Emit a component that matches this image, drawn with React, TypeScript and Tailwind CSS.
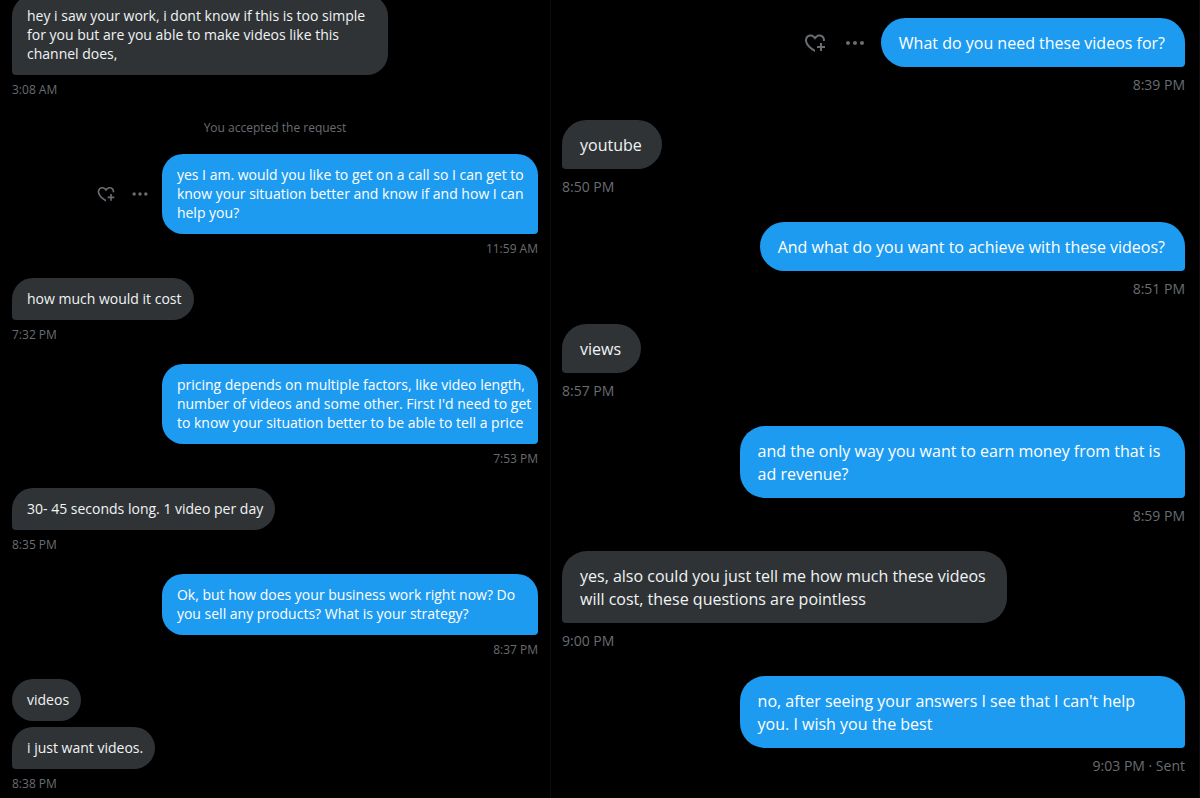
import clsx from "clsx";

type Message = {
  from: "me" | "them";
  text: string;
  time?: string;
  actions?: boolean;
};

type Size = "sm" | "lg";

const firstMessage: Message = {
  from: "them",
  text: "hey i saw your work, i dont know if this is too simple for you but are you able to make videos like this channel does,",
  time: "3:08 AM",
};

const pricingMessages: Message[] = [
  {
    from: "me",
    text: "yes I am. would you like to get on a call so I can get to know your situation better and know if and how I can help you?",
    time: "11:59 AM",
    actions: true,
  },
  { from: "them", text: "how much would it cost", time: "7:32 PM" },
  {
    from: "me",
    text: "pricing depends on multiple factors, like video length, number of videos and some other. First I'd need to get to know your situation better to be able to tell a price",
    time: "7:53 PM",
  },
  { from: "them", text: "30- 45 seconds long. 1 video per day", time: "8:35 PM" },
  {
    from: "me",
    text: "Ok, but how does your business work right now? Do you sell any products? What is your strategy?",
    time: "8:37 PM",
  },
  { from: "them", text: "videos" },
  { from: "them", text: "i just want videos.", time: "8:38 PM" },
];

const goalMessages: Message[] = [
  {
    from: "me",
    text: "What do you need these videos for?",
    time: "8:39 PM",
    actions: true,
  },
  { from: "them", text: "youtube", time: "8:50 PM" },
  {
    from: "me",
    text: "And what do you want to achieve with these videos?",
    time: "8:51 PM",
  },
  { from: "them", text: "views", time: "8:57 PM" },
  {
    from: "me",
    text: "and the only way you want to earn money from that is ad revenue?",
    time: "8:59 PM",
  },
  {
    from: "them",
    text: "yes, also could you just tell me how much these videos will cost, these questions are pointless",
    time: "9:00 PM",
  },
  {
    from: "me",
    text: "no, after seeing your answers I see that I can't help you. I wish you the best",
    time: "9:03 PM · Sent",
  },
];

const HeartPlusIcon = ({ className }: { className: string }) => (
  <svg viewBox="0 0 24 24" fill="currentColor" className={className}>
    <path d="M17 12v3h-2.998v2h3v3h2v-3h3v-2h-3.001v-3H17zm-5 6.839c-3.871-2.34-6.053-4.639-7.127-6.609-1.112-2.04-1.031-3.7-.479-4.82.561-1.13 1.667-1.84 2.91-1.91 1.222-.06 2.68.51 3.892 2.16l.806 1.09.805-1.09c1.211-1.65 2.668-2.22 3.89-2.16 1.242.07 2.347.78 2.908 1.91.334.677.49 1.554.321 2.59h2.011c.153-1.283-.039-2.469-.539-3.48-.887-1.79-2.647-2.91-4.601-3.01-1.65-.09-3.367.56-4.796 2.01-1.43-1.45-3.147-2.1-4.798-2.01-1.954.1-3.714 1.22-4.601 3.01-.896 1.81-.846 4.17.514 6.67 1.353 2.48 4.003 5.12 8.382 7.67l.502.299v-2.32z" />
  </svg>
);

const MoreIcon = ({ className }: { className: string }) => (
  <svg viewBox="0 0 24 24" fill="currentColor" className={className}>
    <path d="M3 12c0-1.1.9-2 2-2s2 .9 2 2-.9 2-2 2-2-.9-2-2zm9 2c1.1 0 2-.9 2-2s-.9-2-2-2-2 .9-2 2 .9 2 2 2zm7 0c1.1 0 2-.9 2-2s-.9-2-2-2-2 .9-2 2 .9 2 2 2z" />
  </svg>
);

const Actions = ({ size }: { size: Size }) => {
  const icon = size === "sm" ? "size-5" : "size-6";
  return (
    <div
      className={clsx(
        "flex shrink-0 text-[#686d72]",
        size === "sm" ? "mr-3 gap-3.5" : "mr-3.5 gap-4"
      )}
    >
      <button type="button" aria-label="Add reaction">
        <HeartPlusIcon className={icon} />
      </button>
      <button type="button" aria-label="More">
        <MoreIcon className={icon} />
      </button>
    </div>
  );
};

const Bubble = ({ message, size }: { message: Message; size: Size }) => {
  const { from, text, time, actions } = message;
  const mine = from === "me";
  const small = size === "sm";
  // wrapped text already leaves a ragged right edge
  const wraps = text.length > 60;
  return (
    <li>
      <div className={clsx("flex items-center", mine && "justify-end")}>
        {actions && <Actions size={size} />}
        <p
          className={clsx(
            "max-w-[71.5%]",
            mine ? "bg-[#1d9bf0] text-white" : "bg-[#2f3336] text-[#f1f3f4]",
            small
              ? "rounded-[21px] pt-[11px] pb-3 pl-[15px] text-[14px] leading-[19px]"
              : "rounded-[25px] pt-3.5 pr-5 pb-3 pl-[18px] text-[16px] leading-[23px]",
            small && (wraps ? "pr-[5px]" : "pr-3"),
            time && (mine ? "rounded-br-[4px]" : "rounded-bl-[4px]")
          )}
        >
          {text}
        </p>
      </div>
      {time ? (
        <time
          className={clsx(
            "block text-[#686d72]",
            mine && "text-right",
            small
              ? "pt-[7px] pb-[21px] text-[12px] leading-4"
              : "pt-[9px] pb-[26px] text-[14px] leading-[18px]"
          )}
        >
          {time}
        </time>
      ) : (
        <div className="h-1.5" />
      )}
    </li>
  );
};

const App = () => {
  return (
    <main className="relative flex min-h-screen overflow-hidden bg-black font-['Open_Sans','Noto_Sans',sans-serif]">
      <section className="-mt-[5px] w-11/24 px-3">
        <ul>
          <Bubble message={firstMessage} size="sm" />
          <li className="pt-px pb-[18px] text-center text-[12px] leading-4 text-[#686d72]">
            You accepted the request
          </li>
          {pricingMessages.map((message) => (
            <Bubble key={message.text} message={message} size="sm" />
          ))}
        </ul>
        {/* scroll-to-bottom button, mostly below the fold */}
        <div className="absolute bottom-0 left-0 flex h-[3px] w-11/24 justify-end overflow-hidden pr-[19px]">
          <button
            type="button"
            aria-label="Scroll to bottom"
            className="h-8 w-10 shrink-0 rounded-[12px] border border-[#2f3336]"
          />
        </div>
      </section>
      <section className="w-13/24 border-x border-b border-[#0c0d0e] pt-[18px] pr-3.5 pl-[11px]">
        <ul>
          {goalMessages.map((message) => (
            <Bubble key={message.text} message={message} size="lg" />
          ))}
        </ul>
      </section>
    </main>
  );
};

export default App;
